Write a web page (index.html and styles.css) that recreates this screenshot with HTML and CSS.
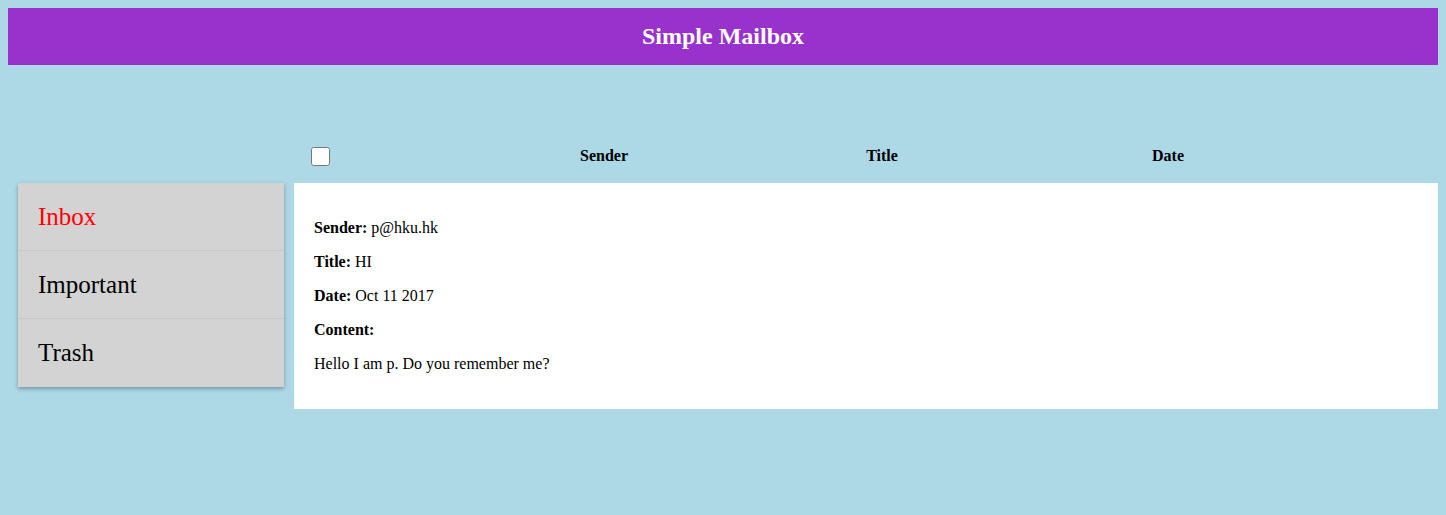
FILE: index.html
```html
<!DOCTYPE html>
<html>
<head>
<meta charset="utf-8">
<title>Simple Mailbox</title>
<link rel="stylesheet" href="styles.css">
</head>
<body>
<header class="topbar">Simple Mailbox</header>
<div class="layout">
  <div class="spacer"></div>
  <div class="list-head">
    <div class="col-check"><input type="checkbox" class="check"></div>
    <div class="col">Sender</div>
    <div class="col">Title</div>
    <div class="col col-date">Date</div>
    <div></div>
  </div>
  <nav class="sidebar">
    <div class="nav-item active">Inbox</div>
    <div class="nav-item">Important</div>
    <div class="nav-item">Trash</div>
  </nav>
  <section class="mail">
    <p><b>Sender:</b> p@hku.hk</p>
    <p><b>Title:</b> HI</p>
    <p><b>Date:</b> Oct 11 2017</p>
    <p><b>Content:</b></p>
    <p>Hello I am p. Do you remember me?</p>
  </section>
</div>
</body>
</html>
```
FILE: styles.css
```css
html, body {
  background: #add8e6;
}
body {
  margin: 8px;
  font-family: "Liberation Serif", "Times New Roman", serif;
  font-size: 16px;
  color: #000;
}
.topbar {
  background: #9932cc;
  color: #fff;
  height: 57px;
  display: flex;
  align-items: center;
  justify-content: center;
  font-size: 24px;
  font-weight: bold;
}
.layout {
  display: grid;
  grid-template-columns: 266px 1fr;
  column-gap: 10px;
  padding-left: 10px;
  margin-top: 65px;
}
.list-head {
  display: grid;
  grid-template-columns: 171px 278px 278px 294px 1fr;
  height: 53px;
  align-items: center;
  font-weight: bold;
}
.col-check {
  padding-left: 17px;
  display: flex;
  align-items: center;
}
.check {
  width: 19px;
  height: 19px;
  margin: 0;
}
.col {
  text-align: center;
  padding-bottom: 2px;
}
.sidebar {
  background: #d3d3d3;
  box-shadow: 0 2px 4px rgba(0, 0, 0, 0.3);
  align-self: start;
}
.nav-item {
  box-sizing: border-box;
  height: 68px;
  display: flex;
  align-items: center;
  padding-left: 20px;
  font-size: 25px;
  border-bottom: 1px solid #c9c9c9;
}
.nav-item:last-child {
  border-bottom: none;
}
.nav-item.active {
  color: #ff0000;
}
.mail {
  background: #fff;
  padding: 20px;
}
.mail p {
  margin: 16px 0;
  line-height: 18px;
}
```
